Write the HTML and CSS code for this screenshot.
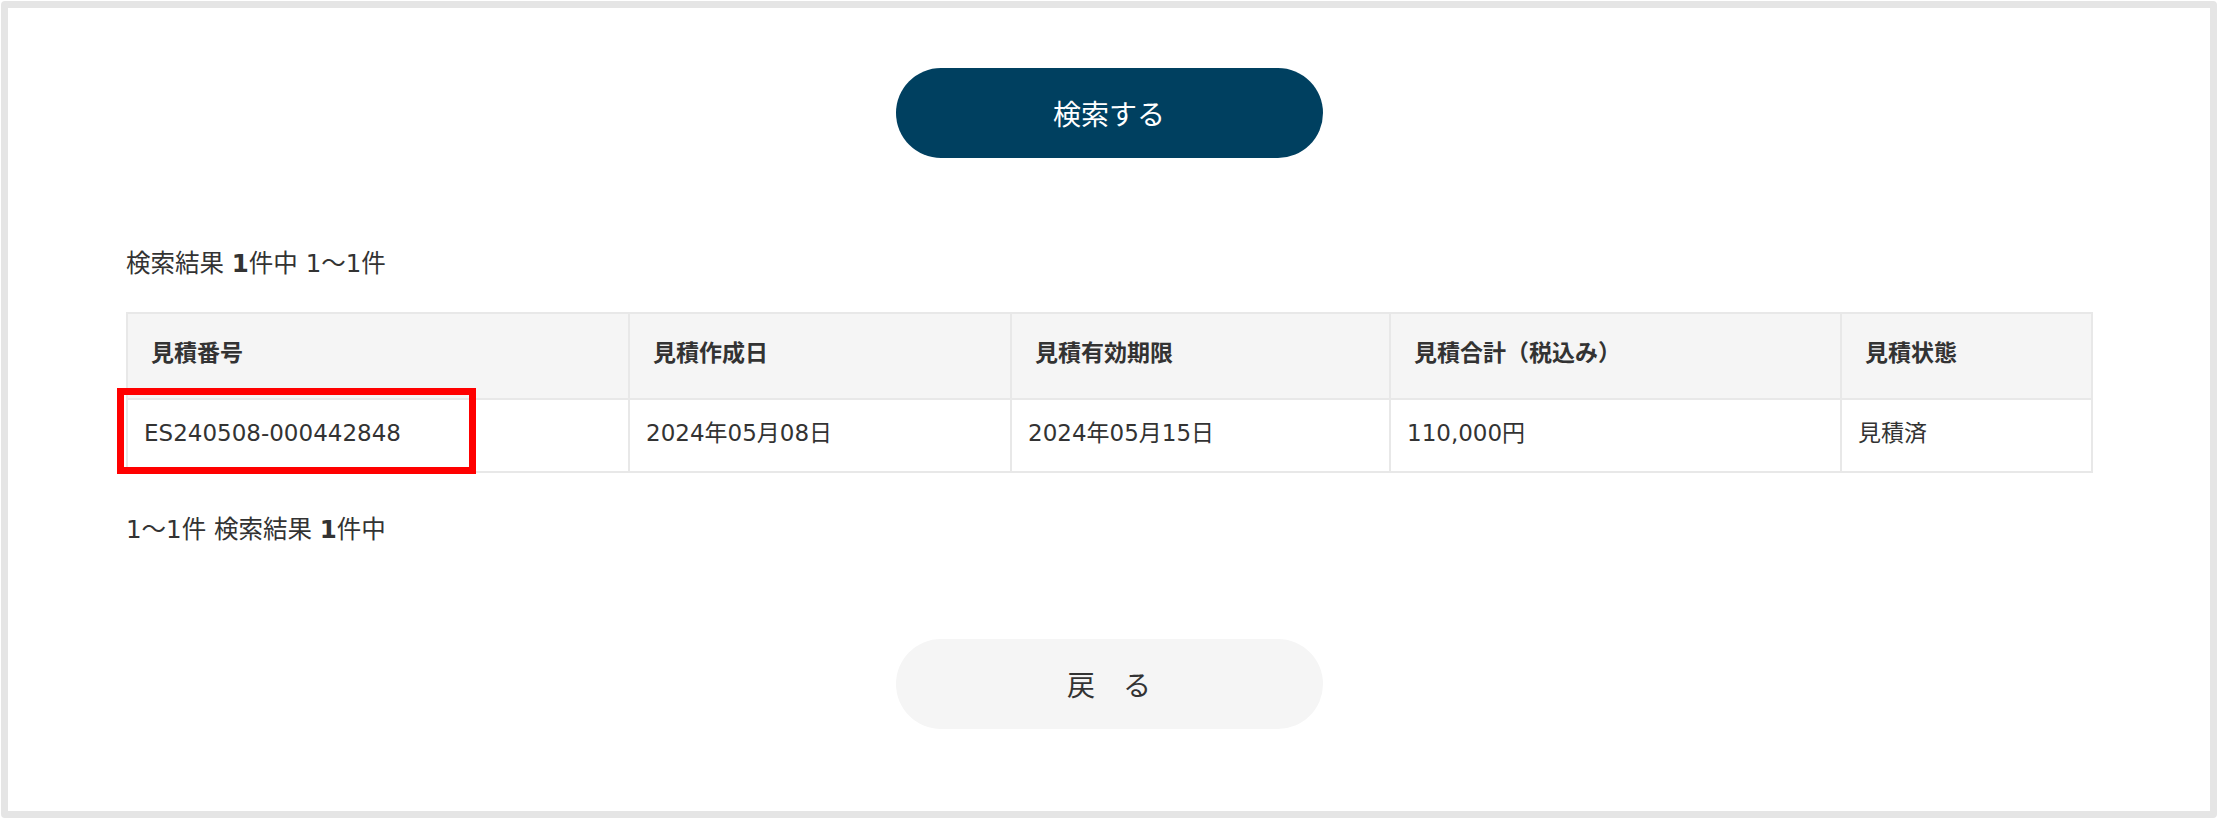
FILE: index.html
```html
<!DOCTYPE html>
<html lang="ja">
<head>
<meta charset="utf-8">
<title>見積検索結果</title>
<link rel="stylesheet" href="styles.css">
</head>
<body>
<div class="frame">
  <div class="content">
    <div class="btn-row top-btn">
      <button class="btn btn-primary" type="button">検索する</button>
    </div>
    <p class="result-info">検索結果 <b>1</b>件中 1〜1件</p>
    <table class="result-table">
      <colgroup>
        <col class="c1"><col class="c2"><col class="c3"><col class="c4"><col class="c5">
      </colgroup>
      <thead>
        <tr>
          <th>見積番号</th>
          <th>見積作成日</th>
          <th>見積有効期限</th>
          <th>見積合計（税込み）</th>
          <th>見積状態</th>
        </tr>
      </thead>
      <tbody>
        <tr>
          <td class="highlight-cell">ES240508-000442848<span class="highlight-box"></span></td>
          <td>2024年05月08日</td>
          <td>2024年05月15日</td>
          <td>110,000円</td>
          <td>見積済</td>
        </tr>
      </tbody>
    </table>
    <p class="result-info bottom-info">1〜1件 検索結果 <b>1</b>件中</p>
    <div class="btn-row back-row">
      <button class="btn btn-back" type="button">戻　る</button>
    </div>
  </div>
</div>
</body>
</html>
```

FILE: styles.css
```css
* { box-sizing: border-box; }

html, body {
  margin: 0;
  padding: 0;
  background: #ffffff;
}

body {
  font-family: "DejaVu Sans", "Noto Sans CJK JP", sans-serif;
  font-size: 23px;
  color: #333333;
}

.frame {
  margin: 1px 0 0 1px;
  width: 2216px;
  height: 817px;
  border: 7px solid #e5e5e5;
  border-radius: 4px;
  background: #ffffff;
}

.content {
  padding: 60px 118px 0;
}

.btn-row {
  display: flex;
  justify-content: center;
}

.btn {
  width: 427px;
  height: 90px;
  border: none;
  border-radius: 45px;
  font-family: "Noto Sans CJK JP", sans-serif;
  font-size: 28px;
  padding: 0;
  cursor: pointer;
}

.btn-primary {
  background: #004060;
  color: #ffffff;
}

.btn-back {
  background: #f5f5f5;
  color: #333333;
}

.result-info {
  margin: 90px 0 0;
  line-height: 32px;
  height: 32px;
  font-size: 24.5px;
}

.result-info b {
  font-weight: 700;
}

.result-table {
  margin-top: 32px;
  width: 1965px;
  border-collapse: collapse;
  table-layout: fixed;
}

.c1 { width: 502px; }
.c2 { width: 382px; }
.c3 { width: 379px; }
.c4 { width: 451px; }
.c5 { width: 251px; }

.result-table th,
.result-table td {
  border: 2px solid #e8e8e8;
  text-align: left;
  white-space: nowrap;
  line-height: 30px;
}

.result-table th {
  background: #f5f5f5;
  font-weight: 700;
  height: 86px;
  padding: 0 0 6px 23px;
}

.result-table td {
  height: 73px;
  padding: 0 0 6px 16px;
  font-weight: 400;
}

.highlight-cell {
  position: relative;
}

.highlight-box {
  position: absolute;
  left: -11px;
  top: -12px;
  width: 359px;
  height: 86px;
  border: 7px solid #ff0000;
  pointer-events: none;
}

.bottom-info {
  margin-top: 41px;
}

.back-row {
  margin-top: 93px;
}
```
